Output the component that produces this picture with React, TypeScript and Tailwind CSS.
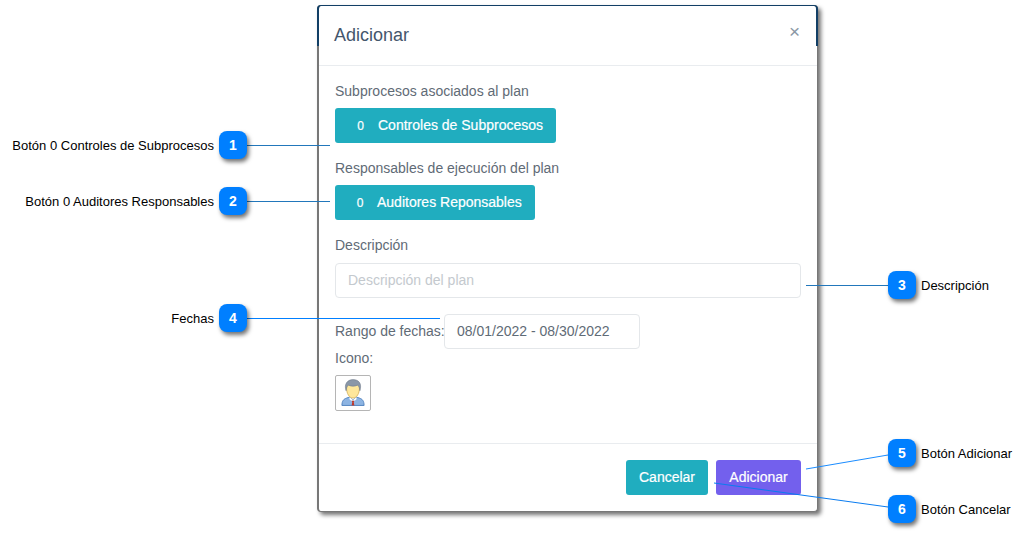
import React from "react";

const callouts = [
  { n: 1, text: "Botón 0 Controles de Subprocesos", y: "top-[131px]", side: "left" },
  { n: 2, text: "Botón 0 Auditores Responsables", y: "top-[187px]", side: "left" },
  { n: 3, text: "Descripción", y: "top-[271px]", side: "right" },
  { n: 4, text: "Fechas", y: "top-[304px]", side: "left" },
  { n: 5, text: "Botón Adicionar", y: "top-[439px]", side: "right" },
  { n: 6, text: "Botón Cancelar", y: "top-[495px]", side: "right" },
];

function Callout({ n, text, y, side }: { n: number; text: string; y: string; side: string }) {
  const badge = (
    <div className="w-[28px] h-[28px] rounded-[8px] bg-[#007fff] text-white text-[14px] font-bold flex items-center justify-center shadow-[2px_3px_4px_rgba(0,0,0,0.55)]">
      {n}
    </div>
  );
  if (side === "left") {
    return (
      <div className={`absolute left-0 w-[247px] ${y} flex items-center justify-end gap-[5px]`}>
        <span className="pt-[1px] text-[13px] text-black whitespace-nowrap">{text}</span>
        {badge}
      </div>
    );
  }
  return (
    <div className={`absolute left-[888px] ${y} flex items-center gap-[5px]`}>
      {badge}
      <span className="pt-[1px] text-[13px] text-black whitespace-nowrap">{text}</span>
    </div>
  );
}

function TealButton({ count, label, width, gap }: { count: string; label: string; width: string; gap: string }) {
  return (
    <button
      type="button"
      className={`${width} h-[35px] rounded-[3px] bg-[#20adbf] text-white text-[14px] [-webkit-text-stroke:0.2px_white] flex items-center`}
    >
      <span className={`${gap} pl-[8px] text-center text-[12px]`}>{count}</span>
      <span className="whitespace-nowrap">{label}</span>
    </button>
  );
}

function UserIcon() {
  return (
    <svg width="24" height="28" viewBox="0 0 26 29">
      <path d="M1 28c0-5 2-7 5-8l3-1 4 3 4-3 3 1c3 1 5 3 5 8z" fill="#8db4e2" stroke="#4f81bd" strokeWidth="1" />
      <path d="M9.500 19l3.500 3 3.500-3 .5 2-2 2h-4l-2-2z" fill="#ffffff" />
      <path d="M11.500 23h3l-.7 1.500.7 3.500h-3l.7-3.500z" fill="#c0392b" />
      <path d="M6 9c0 6 3 11 7 11s7-5 7-11-3-6-7-6-7 0-7 6z" fill="#fee79b" stroke="#d0a94f" strokeWidth="0.8" />
      <path d="M5.500 12C3 5 7 0 13 0s10 4 7.500 12c-.5-3-1-5-2.500-6-3 1.500-7 1.500-10 0-1.500 1-2 3-2.500 6z" fill="#8a97a8" stroke="#6b7686" strokeWidth="0.6" />
    </svg>
  );
}

export default function App() {
  return (
    <div className="relative w-[1028px] h-[534px] overflow-hidden bg-white font-['Liberation_Sans',Arial,sans-serif]">
      <div className="pl-[317px] pt-[5px]">
        <div className="relative w-[501px] h-[507px] bg-white rounded-[4px] border border-l-2 border-[#777777] flex flex-col shadow-[3px_3px_4px_rgba(0,0,0,0.55)]">
          {/* borde azul de la pagina de atras que asoma arriba */}
          <div className="absolute -left-[2px] -right-[1px] -top-[1px] h-[41px] rounded-t-[4px] border-t border-x-2 border-[#123f66] pointer-events-none" />

          <div className="h-[60px] shrink-0 border-b border-[#e9ecef] flex items-start justify-between pl-[15px] pr-[17px]">
            <h5 className="mt-[18px] text-[18px] leading-[22px] text-[#44566c]">Adicionar</h5>
            <span className="mt-[16px] text-[19px] leading-[20px] text-[#8b98a5]">×</span>
          </div>

          <div className="flex-1 pl-[16px] pr-[16px] text-[14px] text-[#5f6b76]">
            <p className="mt-[16px] leading-[18px]">Subprocesos asociados al plan</p>
            <div className="mt-[8px]">
              <TealButton count="0" label="Controles de Subprocesos" width="w-[221px]" gap="w-[43px]" />
            </div>
            <p className="mt-[16px] leading-[18px]">Responsables de ejecución del plan</p>
            <div className="mt-[8px]">
              <TealButton count="0" label="Auditores Reponsables" width="w-[200px]" gap="w-[42px]" />
            </div>
            <p className="mt-[16px] leading-[18px]">Descripción</p>
            <div className="mt-[9px] h-[35px] rounded-[4px] border border-[#e4e7ea] flex items-center pl-[12px] text-[#c4c9ce]">
              Descripción del plan
            </div>
            <div className="mt-[16px] flex items-center">
              <span className="w-[109px] whitespace-nowrap">Rango de fechas:</span>
              <div className="w-[196px] h-[35px] rounded-[4px] border border-[#e4e7ea] flex items-center pl-[12px]">
                08/01/2022 - 08/30/2022
              </div>
            </div>
            <p className="leading-[18px]">Icono:</p>
            <div className="mt-[8px] w-[36px] h-[36px] rounded-[2px] border border-[#b5b5b5] flex items-center justify-center">
              <UserIcon />
            </div>
          </div>

          <div className="h-[68px] shrink-0 border-t border-[#e9ecef] flex justify-end gap-[8px] pt-[16px] pr-[16px]">
            <button type="button" className="w-[82px] h-[35px] rounded-[3px] bg-[#20adbf] text-white text-[14px] [-webkit-text-stroke:0.2px_white]">
              Cancelar
            </button>
            <button type="button" className="w-[85px] h-[35px] rounded-[3px] bg-[#7360ed] text-white text-[14px] [-webkit-text-stroke:0.2px_white]">
              Adicionar
            </button>
          </div>
        </div>
      </div>

      {/* lineas de los callouts */}
      <svg className="absolute left-0 top-0 pointer-events-none" width="1028" height="534">
        <line x1="247" y1="145.5" x2="330" y2="145.5" stroke="#2277bb" />
        <line x1="247" y1="201.5" x2="330" y2="201.5" stroke="#2277bb" />
        <line x1="806" y1="285.5" x2="888" y2="285.5" stroke="#2277bb" />
        <line x1="247" y1="318.5" x2="440" y2="318.5" stroke="#007fff" />
        <line x1="806" y1="469" x2="888" y2="455" stroke="#1a8cff" />
        <line x1="714" y1="483" x2="888" y2="507" stroke="#0a7cf0" />
      </svg>

      {callouts.map((c) => (
        <Callout key={c.n} {...c} />
      ))}
    </div>
  );
}
